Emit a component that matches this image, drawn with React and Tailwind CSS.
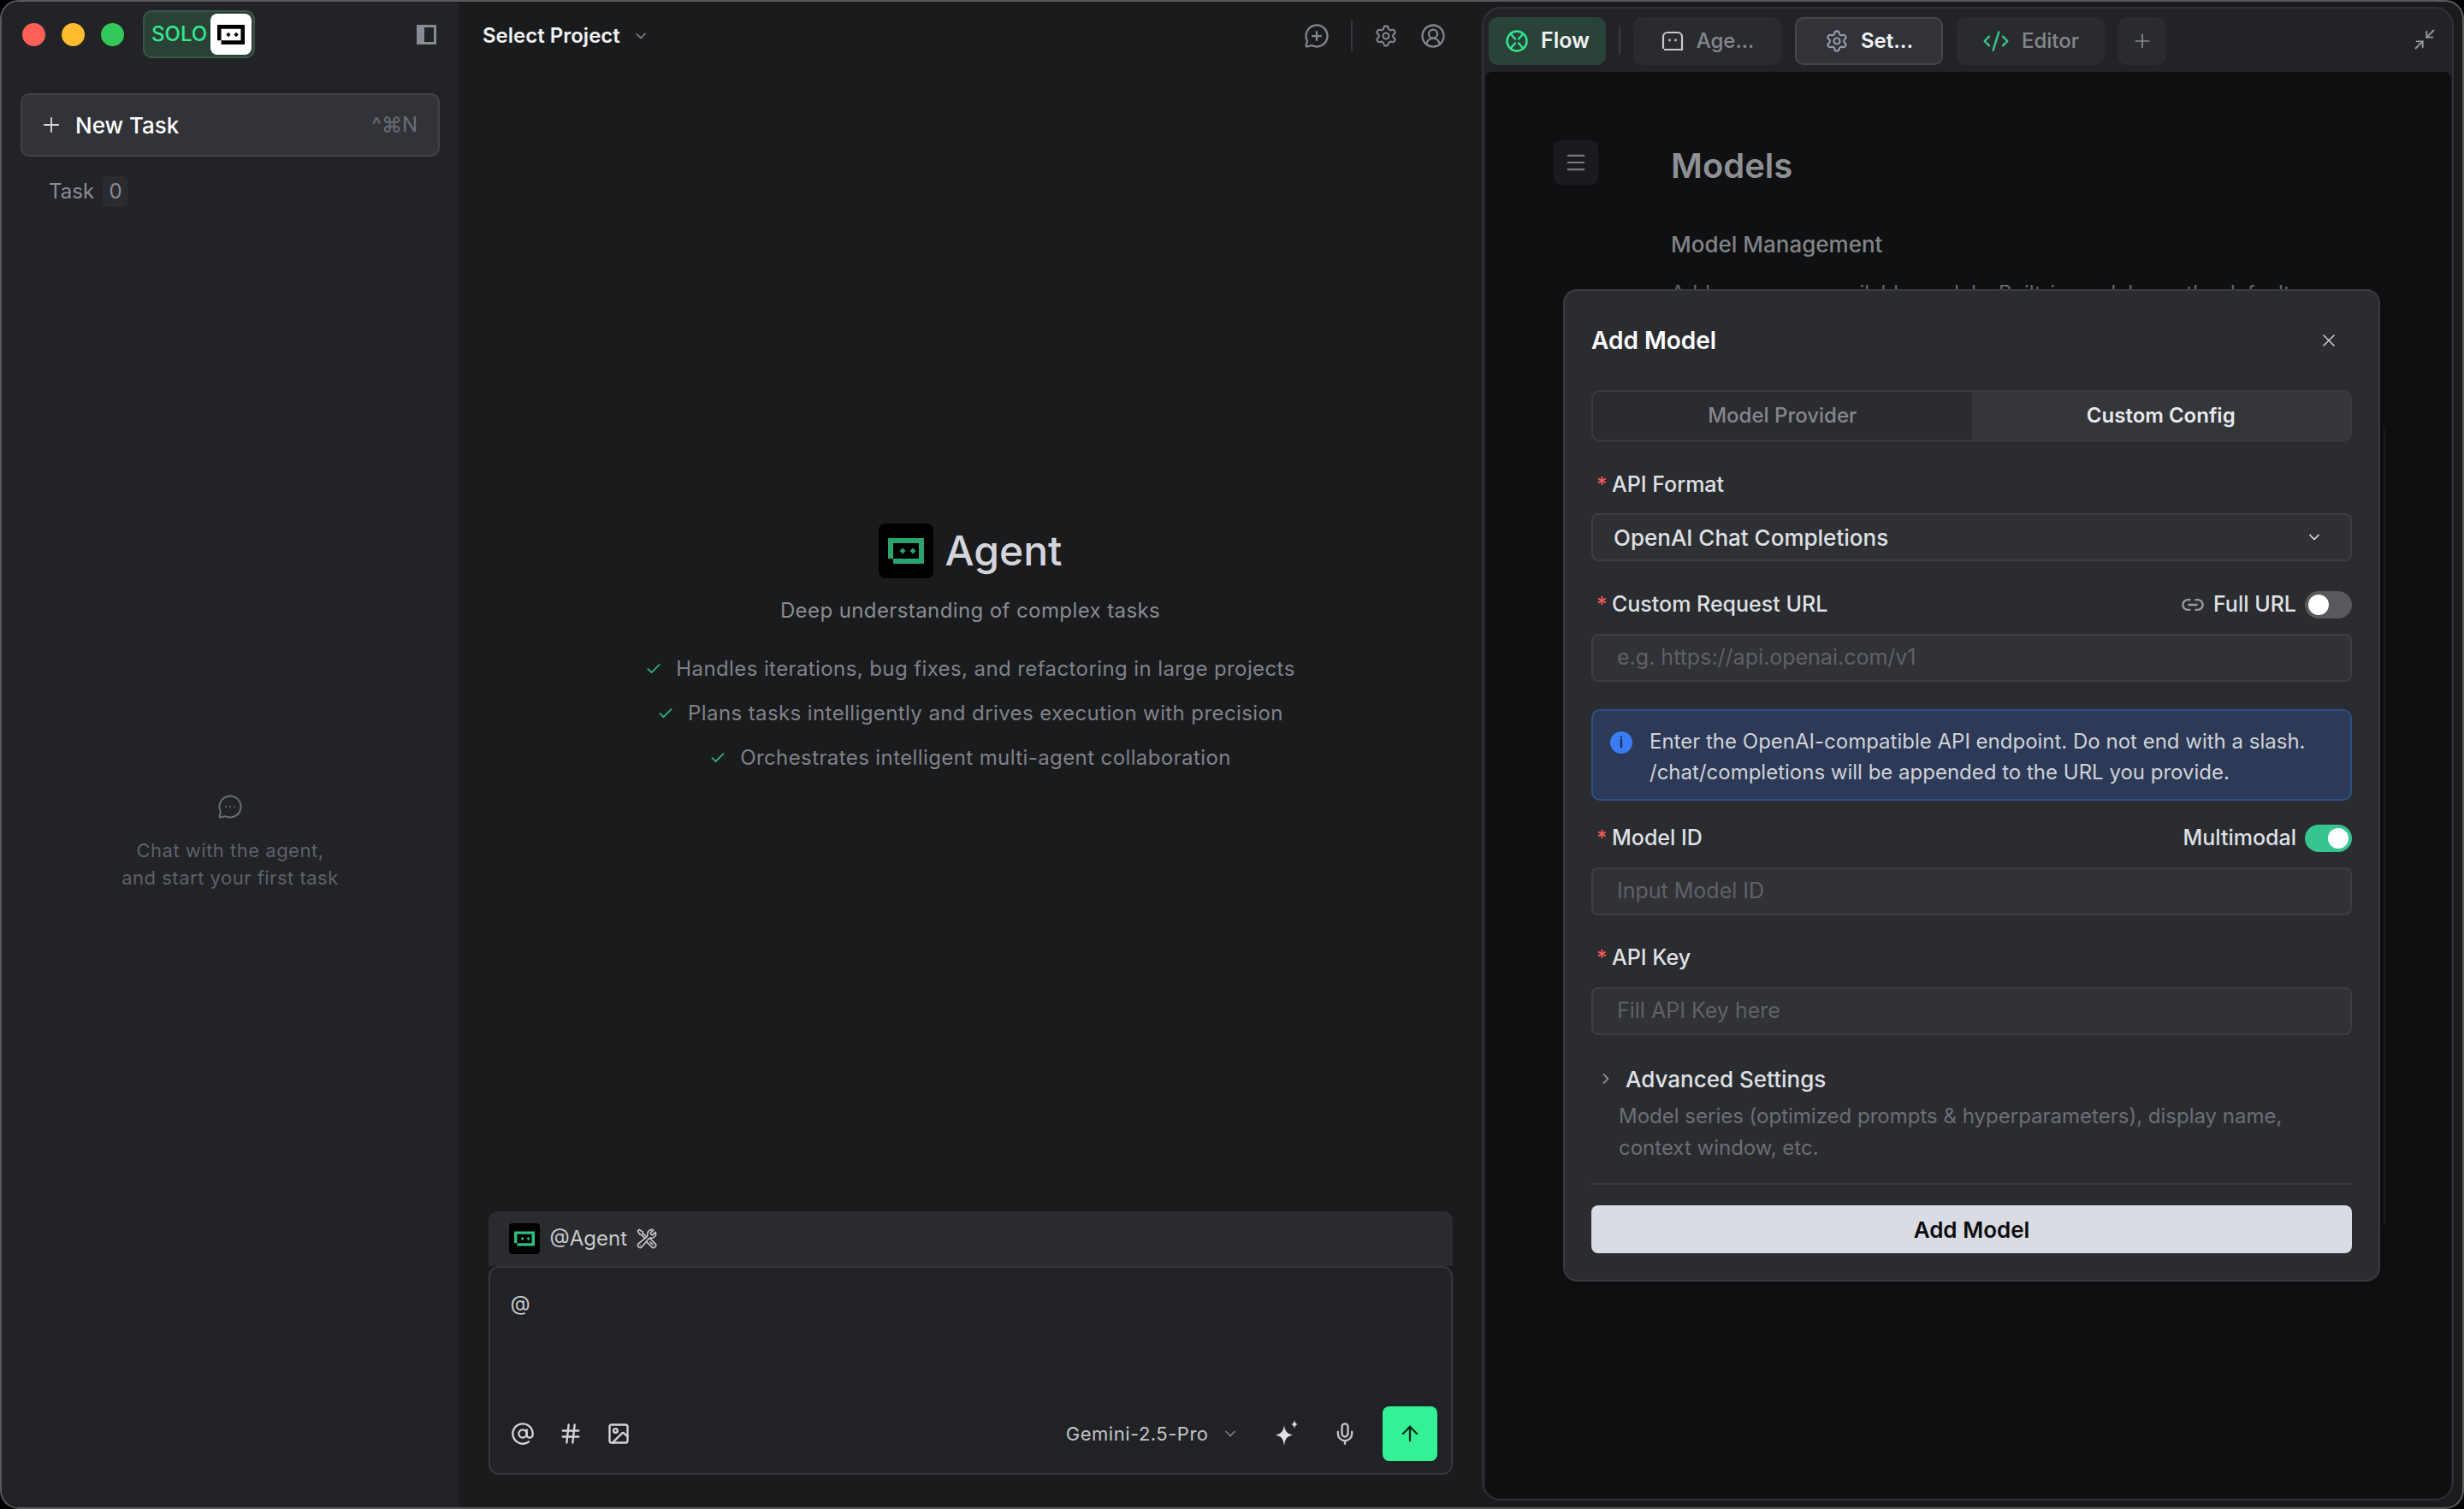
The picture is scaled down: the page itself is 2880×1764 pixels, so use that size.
import React from 'react';
import {
  Plus, Check, X, ChevronDown, ChevronRight, Settings, CodeXml, Minimize2, Menu, Link2,
  AtSign, Hash, Mic, ArrowUp, MessageCirclePlus, MessageCircleMore, CircleUserRound, Image,
} from 'lucide-react';
import { HiOutlineWrenchScrewdriver } from 'react-icons/hi2';

const font = { fontFamily: 'Inter, "Liberation Sans", sans-serif' };

function Logo({ className, color }) {
  return (
    <svg viewBox="0 0 42 30" className={className}>
      <path
        fillRule="evenodd"
        fill={color}
        d="M0 0H42V30H6V24H0ZM6 6V24H36V6ZM17 11.5L20.5 15L17 18.5L13.5 15ZM29 11.5L32.5 15L29 18.5L25.5 15Z"
      />
    </svg>
  );
}

function FlowIcon({ className }) {
  return (
    <svg viewBox="0 0 28 28" fill="none" stroke="currentColor" strokeWidth="2.4" strokeLinecap="round" className={className}>
      <circle cx="14" cy="14" r="11.5" />
      <path d="M8 7l4 4.5M20 7l-4 4.5M8 21l4-4.5M20 21l-4-4.5" />
    </svg>
  );
}

function AgentTabIcon({ className }) {
  return (
    <svg viewBox="0 0 28 28" fill="none" stroke="currentColor" strokeWidth="2.2" className={className}>
      <path d="M3 23V9a5 5 0 0 1 5-5h12a5 5 0 0 1 5 5v15H4" />
      <circle cx="10.5" cy="13" r="1.4" fill="currentColor" stroke="none" />
      <circle cx="17.5" cy="13" r="1.4" fill="currentColor" stroke="none" />
    </svg>
  );
}

function Sparkle({ className }) {
  return (
    <svg viewBox="0 0 32 32" fill="currentColor" className={className}>
      <path d="M13 6c1 7 3 10 10 11.500c-7 1.500-9 4.500-10 12.500c-1-8-3-11-10-12.500c7-1.500 9-4.500 10-11.500Z" />
      <path d="M25 0c.5 3 1.500 4.500 4 5c-2.500.5-3.500 2-4 5c-.5-3-1.500-4.500-4-5c2.500-.5 3.500-2 4-5Z" />
    </svg>
  );
}

function PanelIcon() {
  return (
    <svg viewBox="0 0 23 23" className="w-[23px] h-[23px]">
      <rect x="0" y="0" width="23" height="23" fill="#8a8c94" />
      <rect x="9" y="3" width="11" height="17" fill="#222327" />
    </svg>
  );
}

function Tab({ icon, label, active, iconClass }) {
  return (
    <div
      className={`w-[173px] h-[56px] rounded-[10px] flex items-center justify-center gap-[14px] text-[24px] font-medium border-2 ${
        active ? 'bg-[#323338] border-[#45474c] text-[#f0f1f3] font-semibold' : 'bg-[#2a2b2f] border-[#2a2b2f] text-[#85878e]'
      }`}
    >
      <span className={iconClass}>{icon}</span>
      {label}
    </div>
  );
}

function Toggle({ on }) {
  return (
    <div className={`w-[55px] h-[32px] rounded-full flex items-center px-[4px] ${on ? 'bg-[#36c48f] justify-end' : 'bg-[#58595c] justify-start'}`}>
      <div className="w-[24px] h-[24px] rounded-full bg-white" />
    </div>
  );
}

function Label({ children, right }) {
  return (
    <div className="flex items-center justify-between h-[34px]">
      <div className="flex items-center pl-[6px] text-[25px] font-medium text-[#dfe0e5]">
        <span className="text-[#f05a5a] w-[18px] text-[24px]">*</span>
        {children}
      </div>
      {right}
    </div>
  );
}

function Input({ placeholder }) {
  return (
    <div className="mt-[17px] h-[56px] rounded-[8px] border-2 border-[#3d3e43] bg-[#313236] flex items-center pl-[28px] text-[25px] text-[#5f6168]">
      {placeholder}
    </div>
  );
}

function AddModelDialog() {
  return (
    <div className="absolute left-[1825px] top-[336px] w-[955px] h-[1160px] rounded-[16px] border-2 border-[#3a3b40] bg-[#2b2c30] px-[31px] pt-[40px] shadow-xl">
      <div className="flex items-center justify-between h-[36px]">
        <span className="text-[28px] font-semibold text-white">Add Model</span>
        <X className="w-[24px] h-[24px] text-[#c8c9cd] mr-[15px]" strokeWidth={1.6} />
      </div>
      <div className="mt-[40px] h-[60px] rounded-[10px] border-2 border-[#3a3b40] flex overflow-hidden text-[24px]">
        <div className="flex-1 flex items-center justify-center font-medium text-[#85878e]">Model Provider</div>
        <div className="flex-1 flex items-center justify-center font-semibold bg-[#35363a] text-[#e8e9ec]">Custom Config</div>
      </div>

      <div className="mt-[34px]">
        <Label>API Format</Label>
        <div className="mt-[16px] h-[56px] rounded-[8px] border-2 border-[#3d3e43] bg-[#2f3034] flex items-center justify-between pl-[24px] pr-[32px] text-[26px] font-medium text-[#dfe0e4]">
          OpenAI Chat Completions
          <ChevronDown className="w-[20px] h-[20px]" strokeWidth={2} />
        </div>
      </div>

      <div className="mt-[34px]">
        <Label
          right={
            <div className="flex items-center text-[25px] font-medium text-[#dfe0e5]">
              <Link2 className="w-[28px] h-[28px] text-[#9a9ca3] mr-[10px]" strokeWidth={2} />
              Full URL
              <span className="ml-[10px]"><Toggle /></span>
            </div>
          }
        >
          Custom Request URL
        </Label>
        <Input placeholder="e.g. https://api.openai.com/v1" />
      </div>

      <div className="mt-[32px] h-[107px] rounded-[10px] border-2 border-[#2f4f8a] bg-[#2c3a57] flex pl-[20px] pt-[18px] text-[24px] leading-[36px] text-[#d0d2d8]">
        <div className="w-[26px] h-[26px] mt-[6px] rounded-full bg-[#3b7cf5] flex items-center justify-center text-[17px] font-semibold text-[#1d2a45] shrink-0">i</div>
        <div className="ml-[20px]">
          Enter the OpenAI-compatible API endpoint. Do not end with a slash.
          <br />
          /chat/completions will be appended to the URL you provide.
        </div>
      </div>

      <div className="mt-[27px]">
        <Label
          right={
            <div className="flex items-center text-[25px] font-medium text-[#dfe0e5]">
              Multimodal
              <span className="ml-[10px]"><Toggle on /></span>
            </div>
          }
        >
          Model ID
        </Label>
        <Input placeholder="Input Model ID" />
      </div>

      <div className="mt-[33px]">
        <Label>API Key</Label>
        <Input placeholder="Fill API Key here" />
      </div>

      <div className="mt-[34px] flex items-center h-[34px] pl-[7px] text-[26px] font-medium text-[#dfe0e4]">
        <ChevronRight className="w-[20px] h-[20px] text-[#a0a2a8] mr-[13px]" strokeWidth={2} />
        Advanced Settings
      </div>
      <div className="mt-[8px] pl-[32px] pr-[40px] text-[24px] leading-[37px] text-[#6c6e75]">
        Model series (optimized prompts &amp; hyperparameters), display name,
        <br />
        context window, etc.
      </div>
      <div className="mt-[23px] h-[2px] bg-[#393a3f]" />
      <div className="mt-[24px] h-[56px] rounded-[8px] bg-[#dadce4] flex items-center justify-center text-[26px] font-semibold text-[#0c0c0e]">
        Add Model
      </div>
    </div>
  );
}

function RightPanel() {
  return (
    <div className="w-[1146px] pt-[6px] pb-[8px] pr-[10px] flex">
      <div className="flex-1 flex flex-col rounded-[22px] border-2 border-[#303236] bg-[#212326] overflow-hidden">
        <div className="h-[74px] shrink-0 flex items-start pt-[10px] pl-[6px] relative">
          <div className="w-[137px] h-[56px] rounded-[10px] bg-[#29423a] flex items-center justify-center gap-[14px] text-[25px] font-semibold text-[#f0f1f3]">
            <FlowIcon className="w-[28px] h-[28px] text-[#33e88f]" />
            Flow
          </div>
          <div className="w-[2px] h-[32px] mt-[12px] mx-[15px] bg-[#3a3c40]" />
          <div className="flex gap-[16px]">
            <Tab label="Age..." icon={<AgentTabIcon className="w-[28px] h-[28px]" />} iconClass="text-[#c8c9cd]" />
            <Tab label="Set..." active icon={<Settings className="w-[28px] h-[28px]" strokeWidth={1.8} />} iconClass="text-[#9a9ca8]" />
            <Tab label="Editor" icon={<CodeXml className="w-[32px] h-[32px]" strokeWidth={1.8} />} iconClass="text-[#33c88a]" />
            <div className="w-[56px] h-[56px] rounded-[10px] bg-[#2a2b2f] flex items-center justify-center">
              <Plus className="w-[26px] h-[26px] text-[#85878e]" strokeWidth={1.6} />
            </div>
          </div>
          <Minimize2 className="w-[28px] h-[28px] text-[#9a9ca3] ml-auto mr-[18px] mt-[12px]" strokeWidth={1.6} />
        </div>
        <div className="flex-1 bg-[#0f1011] rounded-t-[8px] ml-[2px] mr-[1px] flex pt-[80px] pl-[80px] overflow-hidden">
          <div className="w-[52px] h-[52px] rounded-[8px] bg-[#1a1b1e] flex items-center justify-center shrink-0">
            <Menu className="w-[28px] h-[28px] text-[#77797d]" strokeWidth={1.8} />
          </div>
          <div className="ml-[85px] flex-1 pr-[80px]">
            <div className="h-[60px] flex items-center text-[40px] font-semibold text-[#8f9094]">Models</div>
            <div className="mt-[43px] h-[36px] flex items-center text-[26px] font-medium text-[#828387]">Model Management</div>
            <div className="mt-[22px] text-[24px] text-[#66676a] whitespace-nowrap overflow-hidden">
              Add or manage available models. Built-in models are the default
            </div>
          </div>
        </div>
      </div>
    </div>
  );
}

function Composer() {
  return (
    <div className="w-[1127px] mx-auto mb-[38px]">
      <div className="h-[64px] rounded-t-[10px] bg-[#2a2b2f] flex items-center pl-[24px] gap-[12px] text-[24px] text-[#c8c9cd]">
        <div className="w-[36px] h-[36px] rounded-[4px] bg-black flex items-center justify-center">
          <Logo className="w-[24px] h-[18px]" color="#2fbf7f" />
        </div>
        <span>@Agent</span>
        <HiOutlineWrenchScrewdriver className="w-[26px] h-[26px] -ml-[2px]" />
      </div>
      <div className="h-[244px] rounded-[12px] border-2 border-[#36373b] bg-[#212226] flex flex-col pl-[24px] pr-[16px]">
        <div className="mt-[26px] text-[24px] leading-[32px] text-[#c8c9cd]">@</div>
        <div className="mt-[104px] flex items-center justify-between">
          <div className="flex items-center gap-[28px] text-[#d4d5d9]">
            <AtSign className="w-[28px] h-[28px]" strokeWidth={2} />
            <Hash className="w-[28px] h-[28px]" strokeWidth={2} />
            <Image className="w-[28px] h-[28px]" strokeWidth={2} />
          </div>
          <div className="flex items-center text-[#c4c5c9]">
            <span className="text-[22px] tracking-[0.5px]">Gemini-2.5-Pro</span>
            <ChevronDown className="w-[20px] h-[20px] ml-[15px] text-[#85878e]" strokeWidth={2} />
            <Sparkle className="w-[32px] h-[32px] ml-[40px] text-[#dfe0e4]" />
            <Mic className="w-[28px] h-[28px] ml-[38px]" strokeWidth={2} />
            <div className="w-[64px] h-[64px] ml-[30px] rounded-[8px] bg-[#33f295] flex items-center justify-center">
              <ArrowUp className="w-[28px] h-[28px] text-[#0c2a1c]" strokeWidth={2} />
            </div>
          </div>
        </div>
      </div>
    </div>
  );
}

function Feature({ children }) {
  return (
    <div className="flex items-center gap-[16px] h-[52px] text-[24px] tracking-[0.4px] text-[#80828a]">
      <Check className="w-[20px] h-[20px] text-[#2fbf8a]" strokeWidth={2} />
      {children}
    </div>
  );
}

function MainColumn() {
  return (
    <div className="flex-1 flex flex-col bg-[#1a1b1d]">
      <div className="h-[80px] flex items-center pl-[28px] pr-[42px] shrink-0">
        <span className="text-[24px] font-semibold text-[#f0f1f3]">Select Project</span>
        <ChevronDown className="w-[20px] h-[20px] ml-[14px] text-[#85878e]" strokeWidth={2} />
        <MessageCirclePlus className="w-[30px] h-[30px] ml-auto text-[#85878e]" strokeWidth={1.8} />
        <div className="w-[2px] h-[36px] mx-[25px] bg-[#36373b]" />
        <Settings className="w-[28px] h-[28px] text-[#85878e]" strokeWidth={1.8} />
        <CircleUserRound className="w-[30px] h-[30px] ml-[26px] text-[#85878e]" strokeWidth={1.8} />
      </div>
      <div className="flex-1 flex flex-col items-center pt-[526px]">
        <div className="flex items-center gap-[14px]">
          <div className="w-[64px] h-[64px] rounded-[8px] bg-black flex items-center justify-center">
            <Logo className="w-[42px] h-[30px]" color="#2aa36e" />
          </div>
          <span className="text-[48px] font-medium text-[#d4d5dc]">Agent</span>
        </div>
        <div className="mt-[16px] h-[36px] flex items-center text-[24px] tracking-[0.4px] text-[#8a8c92]">
          Deep understanding of complex tasks
        </div>
        <div className="mt-[24px] flex flex-col items-center">
          <Feature>Handles iterations, bug fixes, and refactoring in large projects</Feature>
          <Feature>Plans tasks intelligently and drives execution with precision</Feature>
          <Feature>Orchestrates intelligent multi-agent collaboration</Feature>
        </div>
      </div>
      <Composer />
    </div>
  );
}

function Sidebar() {
  return (
    <div className="w-[534px] flex flex-col bg-[#222327] shrink-0">
      <div className="h-[68px] flex items-center pl-[24px] pr-[26px] pt-[8px] shrink-0">
        <div className="w-[27px] h-[27px] rounded-full bg-[#ff5f57]" />
        <div className="w-[27px] h-[27px] rounded-full bg-[#febc2e] ml-[19px]" />
        <div className="w-[27px] h-[27px] rounded-full bg-[#34c759] ml-[19px]" />
        <div className="ml-[22px] h-[56px] rounded-[10px] border-2 border-[#3a5548] bg-[#2a4236] flex items-center pl-[8px] pr-[2px] gap-[4px]">
          <span className="text-[24px] font-medium text-[#33e88f]">SOLO</span>
          <div className="w-[48px] h-[48px] rounded-[8px] bg-white flex items-center justify-center">
            <Logo className="w-[32px] h-[23px]" color="#000" />
          </div>
        </div>
        <div className="ml-auto"><PanelIcon /></div>
      </div>
      <div className="mx-[22px] mt-[39px] h-[74px] rounded-[10px] border-2 border-[#414246] bg-[#323338] flex items-center pl-[20px] pr-[24px]">
        <Plus className="w-[28px] h-[28px] text-[#d4d5d9]" strokeWidth={1.6} />
        <span className="ml-[14px] text-[26px] font-medium text-white">New Task</span>
        <span className="ml-auto text-[24px] text-[#6b6e76]">^⌘N</span>
      </div>
      <div className="mt-[23px] ml-[55px] flex items-center text-[24px] text-[#8a8d96]">
        Task
        <span className="ml-[10px] w-[30px] h-[36px] rounded-[6px] bg-[#2a2b2f] flex items-center justify-center">0</span>
      </div>
      <div className="flex-1 flex flex-col items-center pt-[686px]">
        <MessageCircleMore className="w-[30px] h-[30px] text-[#6a6d75]" strokeWidth={1.6} />
        <div className="mt-[20px] text-center text-[22px] leading-[32px] tracking-[0.5px] text-[#5e6169]">
          Chat with the agent,
          <br />
          and start your first task
        </div>
      </div>
    </div>
  );
}

export default function App() {
  return (
    <div className="w-[2880px] h-[1764px] bg-black" style={font}>
      <div className="relative w-full h-full rounded-[22px] border-2 border-[#5a5a5c] overflow-hidden flex bg-[#1a1b1d]">
        <Sidebar />
        <MainColumn />
        <RightPanel />
        <div className="absolute left-[2780px] top-[497px] w-[6px] h-[934px] rounded-r-[10px] border-r-2 border-[#1c1d1f]" />
        <AddModelDialog />
      </div>
    </div>
  );
}
